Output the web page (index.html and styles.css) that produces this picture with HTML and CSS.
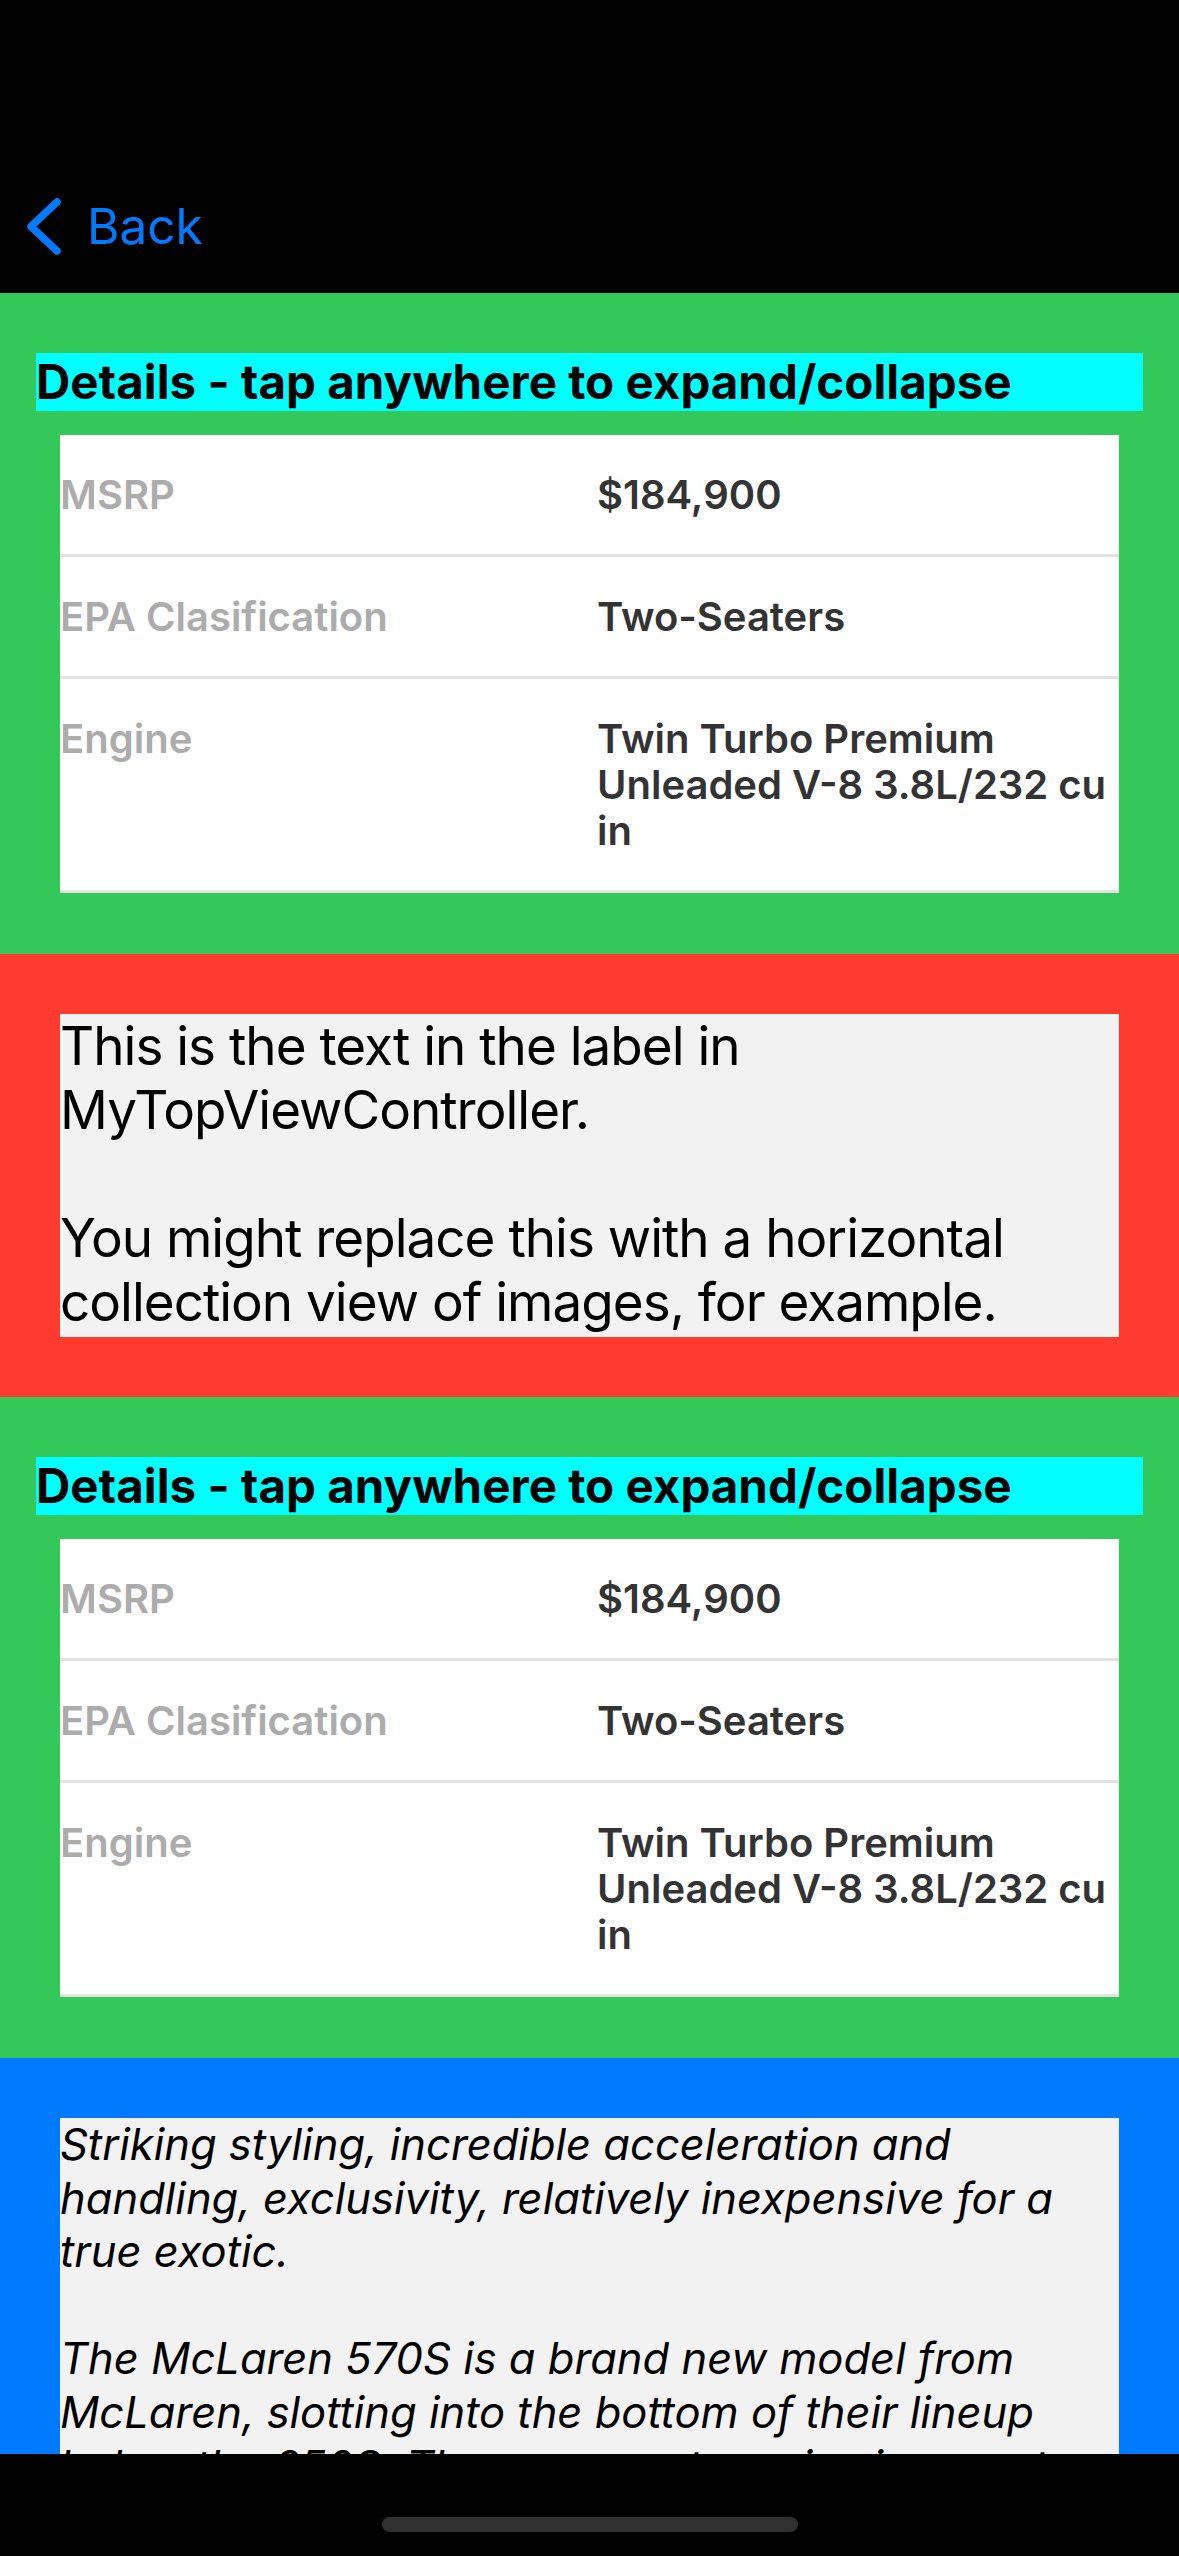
FILE: index.html
```html
<!DOCTYPE html>
<html lang="en">
<head>
<meta charset="utf-8">
<title>Details</title>
<link rel="stylesheet" href="styles.css">
</head>
<body>
<div class="screen">
  <header class="nav">
    <div class="navbar">
      <a class="back">
        <svg class="chev" width="34" height="58" viewBox="0 0 34 58"><path d="M30 4 L4 28.5 L30 53" fill="none" stroke="#007AFF" stroke-width="7.5" stroke-linecap="round" stroke-linejoin="round"/></svg>
        <span class="back-label">Back</span>
      </a>
    </div>
  </header>
  <main class="content">
    <section class="details">
      <h2 class="details-title">Details - tap anywhere to expand/collapse</h2>
      <div class="spec-table">
        <div class="spec-row"><div class="spec-label">MSRP</div><div class="spec-value">$184,900</div></div>
        <div class="spec-row"><div class="spec-label">EPA Clasification</div><div class="spec-value">Two-Seaters</div></div>
        <div class="spec-row"><div class="spec-label">Engine</div><div class="spec-value">Twin Turbo Premium Unleaded V-8 3.8L/232 cu in</div></div>
      </div>
    </section>
    <section class="panel panel-red">
      <div class="panel-box">
        <p>This is the text in the label in MyTopViewController.</p>
        <p>You might replace this with a horizontal collection view of images, for example.</p>
      </div>
    </section>
    <section class="details">
      <h2 class="details-title">Details - tap anywhere to expand/collapse</h2>
      <div class="spec-table">
        <div class="spec-row"><div class="spec-label">MSRP</div><div class="spec-value">$184,900</div></div>
        <div class="spec-row"><div class="spec-label">EPA Clasification</div><div class="spec-value">Two-Seaters</div></div>
        <div class="spec-row"><div class="spec-label">Engine</div><div class="spec-value">Twin Turbo Premium Unleaded V-8 3.8L/232 cu in</div></div>
      </div>
    </section>
    <section class="panel panel-blue">
      <div class="panel-box italic">
        <p>Striking styling, incredible acceleration and handling, exclusivity, relatively inexpensive for a true exotic.</p>
        <p>The McLaren 570S is a brand new model from McLaren, slotting into the bottom of their lineup below the 650S. The new sports series is meant to rival the Porsche 911 Turbo and Audi R8.</p>
      </div>
    </section>
  </main>
  <footer class="homebar"><div class="home-indicator"></div></footer>
</div>
</body>
</html>
```
FILE: styles.css
```css
* { box-sizing: border-box; }
html, body { margin: 0; padding: 0; background: #000; }
body { font-family: Inter, "Noto Sans", sans-serif; }

.screen {
  width: 1179px;
  height: 2556px;
  display: flex;
  flex-direction: column;
  background: #000;
  overflow: hidden;
}

.nav {
  height: 293px;
  flex: none;
  background: #000;
  padding-top: 161px;
}
.navbar {
  height: 132px;
  display: flex;
  align-items: center;
  padding-left: 27px;
}
.back {
  display: flex;
  align-items: center;
  gap: 26px;
  color: #007AFF;
  text-decoration: none;
}
.chev { display: block; }
.back-label {
  font-size: 49.5px;
  line-height: 1.21;
  font-weight: 400;
}

.content {
  flex: 1;
  overflow: hidden;
  min-height: 0;
}

.details {
  background: #34C759;
  padding: 60px 36px 61px;
}
.details-title {
  margin: 0;
  height: 58px;
  line-height: 58px;
  font-size: 47.5px;
  font-weight: 700;
  color: #000;
  background: #00FFFF;
  white-space: nowrap;
}
.spec-table {
  margin: 24px 24px 0;
  background: #fff;
}
.spec-row {
  display: grid;
  grid-template-columns: 537px 1fr;
  padding: 37px 0 36px 0;
  border-bottom: 3px solid #e3e3e3;
  font-size: 40px;
  line-height: 46px;
  font-weight: 600;
}
.spec-label { color: #acacac; }
.spec-value { color: #333; }

.panel { padding: 60px 60px; }
.panel-red { background: #FF3B30; }
.panel-blue { background: #007AFF; padding-bottom: 0; }
.panel-box {
  background: #F2F2F2;
  color: #000;
  font-size: 53px;
  letter-spacing: -1px;
  line-height: 64px;
  padding-bottom: 3px;
}
.panel-box p { margin: 0; }
.panel-box p + p { margin-top: 64px; }
.panel-box.italic {
  font-style: italic;
  font-size: 43.5px;
  letter-spacing: 0;
  line-height: 53.6px;
  padding-right: 40px;
}
.panel-box.italic p + p { margin-top: 53.6px; }

.homebar {
  height: 102px;
  flex: none;
  background: #000;
  padding-top: 63px;
  display: flex;
  justify-content: center;
}
.home-indicator {
  width: 416px;
  height: 15px;
  border-radius: 8px;
  background: #303030;
}
```
